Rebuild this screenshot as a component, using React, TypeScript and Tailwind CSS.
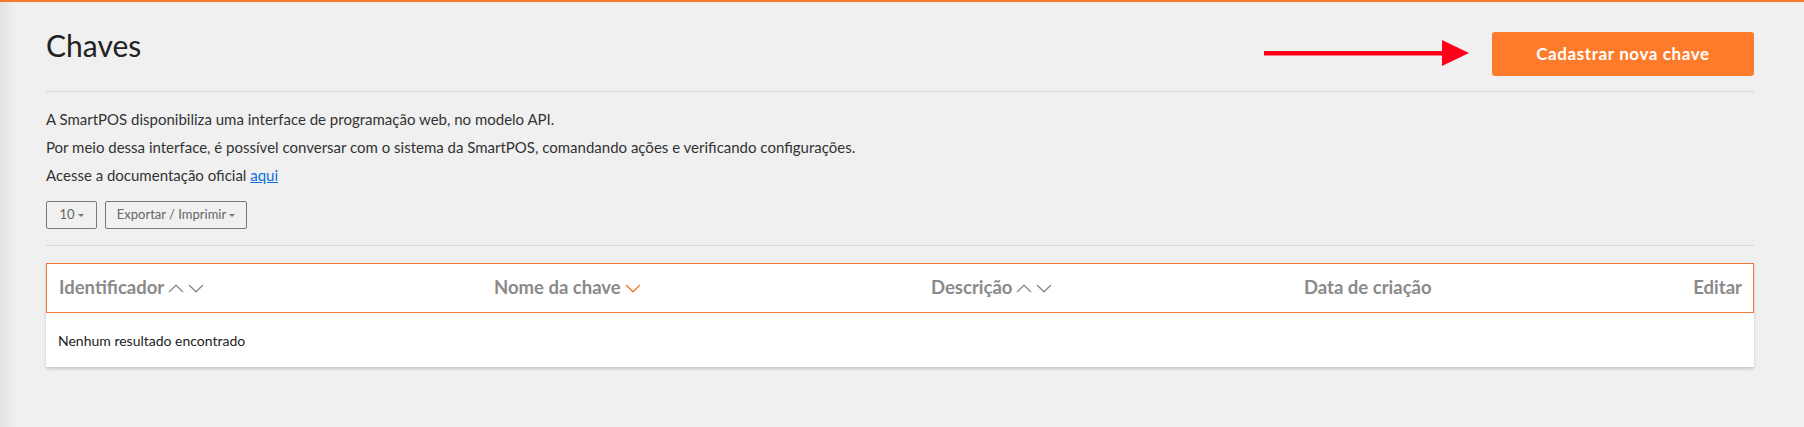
import { useState } from 'react'

const FONT = { fontFamily: 'Lato, "Noto Sans", sans-serif' }

function ChevronUp({ className = '' }: { className?: string }) {
  return (
    <svg viewBox="0 0 16 9" className={`h-[9px] w-[16px] ${className}`} fill="none" stroke="currentColor" strokeWidth="1.3">
      <path d="M1 8 L8 1.2 L15 8" />
    </svg>
  )
}

function ChevronDown({ className = '' }: { className?: string }) {
  return (
    <svg viewBox="0 0 16 9" className={`h-[9px] w-[16px] ${className}`} fill="none" stroke="currentColor" strokeWidth="1.3">
      <path d="M1 1 L8 7.8 L15 1" />
    </svg>
  )
}

function Caret() {
  return <span className="ml-[3px] inline-block h-0 w-0 border-x-[3px] border-t-[3px] border-x-transparent border-t-[#777] align-middle" />
}

export default function App() {
  const [perPage] = useState(10)

  return (
    <div className="flex h-[427px] w-full flex-col bg-[#f0f0f0]" style={FONT}>
      <div className="h-[2px] w-full bg-[#f57a2c]" />
      <div className="flex flex-1">
        {/* sidebar edge shadow */}
        <div className="w-[15px] shrink-0 bg-linear-to-r from-[#e2e2e2] to-[#f0f0f0]" />

        <div className="flex-1 pl-[31px] pr-[50px]">
          {/* Title row */}
          <div className="flex items-start justify-between border-b border-[#d8d8d8] pb-[15px] pt-[30px]">
            <h1 className="mt-[-3px] text-[30px] leading-[32px] text-[#222]">Chaves</h1>
            <div className="flex items-center">
              <svg viewBox="0 0 205 26" className="mr-[23px] mt-[-3px] h-[26px] w-[205px]">
                <rect x="0" y="11" width="180" height="4.5" fill="#ff001a" />
                <polygon points="178,0 205,13 178,26" fill="#ff001a" />
              </svg>
              <button
                type="button"
                className="h-[44px] w-[262px] rounded-[3px] bg-[#fd7b2a] text-[17px] font-bold tracking-[0.6px] text-white"
              >
                Cadastrar nova chave
              </button>
            </div>
          </div>

          {/* Intro text */}
          <div className="pt-[13px] text-[15px] leading-[28px] text-[#333]">
            <p>A SmartPOS disponibiliza uma interface de programação web, no modelo API.</p>
            <p>Por meio dessa interface, é possível conversar com o sistema da SmartPOS, comandando ações e verificando configurações.</p>
            <p>
              Acesse a documentação oficial{' '}
              <a href="#" className="text-[#0a6fe0] underline">
                aqui
              </a>
            </p>
          </div>

          {/* Toolbar */}
          <div className="mt-[12px] flex gap-[8px] border-b border-[#d8d8d8] pb-[16px]">
            <button type="button" className="flex h-[28px] w-[51px] items-center justify-center rounded-[2px] border border-[#7a7a7a] text-[13px] text-[#666]">
              {perPage}
              <Caret />
            </button>
            <button type="button" className="flex h-[28px] w-[142px] items-center justify-center rounded-[2px] border border-[#7a7a7a] text-[13px] text-[#666]">
              Exportar / Imprimir
              <Caret />
            </button>
          </div>

          {/* Table */}
          <div className="mt-[17px] bg-white shadow-[0_2px_3px_rgba(0,0,0,0.18)]">
            <div className="flex h-[50px] items-center border border-[#f07a35] pl-[12px] pr-[11px] text-[18.5px] font-bold text-[#8a8a8a]">
              <div className="flex w-[435px] items-center gap-[4px]">
                Identificador
                <ChevronUp />
                <ChevronDown />
              </div>
              <div className="flex w-[437px] items-center gap-[4px]">
                Nome da chave
                <ChevronDown className="text-[#f57a2c]" />
              </div>
              <div className="flex w-[373px] items-center gap-[4px]">
                Descrição
                <ChevronUp />
                <ChevronDown />
              </div>
              <div className="flex-1">Data de criação</div>
              <div>Editar</div>
            </div>
            <div className="flex h-[54px] items-center pl-[12px] text-[14px] text-[#222]">Nenhum resultado encontrado</div>
          </div>
        </div>
      </div>
    </div>
  )
}
